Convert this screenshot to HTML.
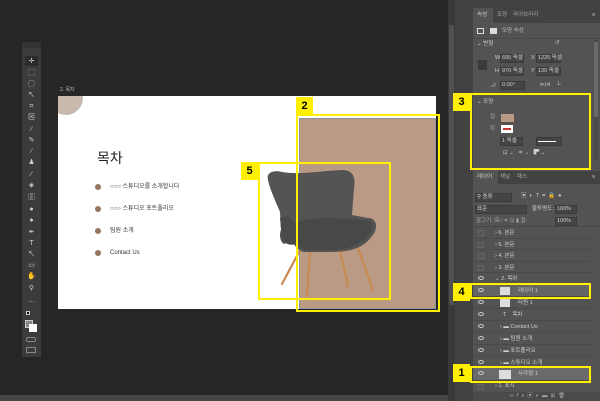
<!DOCTYPE html>
<html><head><meta charset="utf-8"><style>
*{margin:0;padding:0;box-sizing:border-box}
body{width:600px;height:401px;background:#262626;position:relative;overflow:hidden;font-family:"Liberation Sans","Noto Sans CJK KR",sans-serif;color:#ccc}
.a{position:absolute}
.t{position:absolute;font-size:5.5px;white-space:nowrap;color:#cfcfcf;line-height:1}
.yl{position:absolute;border:2px solid #ffef00}
.lab{position:absolute;background:#ffef00;color:#000;font-weight:bold;font-size:11px;text-align:center;line-height:18px;width:17px;height:18px}
.inp{position:absolute;background:#454545;border:1px solid #3a3a3a;height:9px}
.row{position:absolute;left:473px;width:118px;height:11.6px;border-bottom:1px solid #4a4a4a}
.eye{position:absolute;left:5px;top:3px;width:6px;height:4px;border:1px solid #ccc;border-radius:50%}
.box{position:absolute;left:5px;top:3px;width:6px;height:6px;border:1px solid #666}
.tool{position:absolute;left:27px;width:9px;height:7px;font-size:7px;line-height:7px;color:#d0d0d0;text-align:center}
</style></head><body>
<!-- toolbar -->
<div class="a" style="left:22px;top:42px;width:19px;height:315px;background:#3b3b3b"></div>
<div class="a" style="left:22px;top:42px;width:19px;height:6px;background:#333"></div>
<div class="a" style="left:25px;top:56px;width:13px;height:10px;background:#2b2b2b"></div>
<div class="tool" style="top:58px">✛</div>
<div class="tool" style="top:70px">⬚</div>
<div class="tool" style="top:81px">◯</div>
<div class="tool" style="top:92px">↖</div>
<div class="tool" style="top:103px">⌗</div>
<div class="tool" style="top:114px">⊠</div>
<div class="tool" style="top:126px">∕</div>
<div class="tool" style="top:137px">✎</div>
<div class="tool" style="top:148px">∕</div>
<div class="tool" style="top:159px">♟</div>
<div class="tool" style="top:171px">∕</div>
<div class="tool" style="top:182px">◈</div>
<div class="tool" style="top:194px">▥</div>
<div class="tool" style="top:206px">●</div>
<div class="tool" style="top:217px">♠</div>
<div class="tool" style="top:229px">✒</div>
<div class="tool" style="top:240px">T</div>
<div class="tool" style="top:251px">↖</div>
<div class="tool" style="top:262px">▭</div>
<div class="tool" style="top:273px">✋</div>
<div class="tool" style="top:285px">⚲</div>
<div class="tool" style="top:297px">…</div>
<div class="a" style="left:26px;top:311px;width:4px;height:4px;background:#000;border:1px solid #ccc"></div>
<div class="a" style="left:25px;top:320px;width:8px;height:8px;background:#888;border:1px solid #ccc"></div>
<div class="a" style="left:29px;top:324px;width:8px;height:8px;background:#fff"></div>
<div class="a" style="left:26px;top:337px;width:10px;height:5px;border:1px solid #888;border-radius:2px"></div>
<div class="a" style="left:26px;top:347px;width:10px;height:6px;border:1px solid #888"></div>

<!-- canvas -->
<div class="t" style="left:60px;top:88px;font-size:5px;color:#bbb">2. 목차</div>
<div class="a" style="left:58px;top:96px;width:378px;height:213px;background:#fff;overflow:hidden">
  <div class="a" style="left:-9px;top:-15px;width:34px;height:34px;border-radius:50%;background:#c9b8ad"></div>
  <div class="a" style="left:39px;top:52px;font-size:14px;color:#222">목차</div>
  <div class="a" style="left:37px;top:88px;width:6px;height:6px;border-radius:50%;background:#957561"></div>
  <div class="a" style="left:37px;top:110px;width:6px;height:6px;border-radius:50%;background:#957561"></div>
  <div class="a" style="left:37px;top:132px;width:6px;height:6px;border-radius:50%;background:#957561"></div>
  <div class="a" style="left:37px;top:154px;width:6px;height:6px;border-radius:50%;background:#957561"></div>
  <div class="t" style="left:52px;top:88px;color:#333;font-size:6px">○○○ 스튜디오를 소개합니다</div>
  <div class="t" style="left:52px;top:110px;color:#333;font-size:6px">○○○ 스튜디오 포트폴리오</div>
  <div class="t" style="left:52px;top:132px;color:#333;font-size:6px">팀원 소개</div>
  <div class="t" style="left:52px;top:154px;color:#333;font-size:6px">Contact Us</div>
  <div class="a" style="left:241px;top:22px;width:137px;height:191px;background:#bb9a85;border:1px solid #8a96a0"></div>
</div>
<!-- chair -->
<svg class="a" style="left:260px;top:160px" width="130" height="140" viewBox="0 0 130 140">
 <g stroke="#c88a52" stroke-width="2.2" stroke-linecap="round">
  <line x1="40" y1="90" x2="22" y2="124"/>
  <line x1="50" y1="90" x2="47" y2="136"/>
  <line x1="80" y1="90" x2="88" y2="126"/>
  <line x1="98" y1="88" x2="113" y2="130"/>
 </g>
 <path d="M8,20 C6,12 14,10 22,12 C40,15 60,11 82,10 C92,10 96,16 94,28 L92,55 L108,58 C118,58 118,70 112,76 C104,88 90,92 70,92 L44,92 C36,90 34,84 32,80 L24,84 C20,82 19,74 21,70 L20,52 C16,42 10,30 8,20 Z" fill="#545454"/>
 <path d="M36,62 C55,56 80,58 108,60 C114,64 114,70 110,74 C100,86 86,90 70,90 L46,90 C38,88 36,82 35,76 Z" fill="#484848"/>
 <path d="M20,58 C26,54 34,58 36,66 L36,84 C30,86 24,84 22,78 Z" fill="#4a4a4a"/>
</svg>
<!-- yellow annotations -->
<div class="yl" style="left:296px;top:114px;width:144px;height:198px"></div>
<div class="lab" style="left:296px;top:97px">2</div>
<div class="yl" style="left:258px;top:162px;width:133px;height:138px"></div>
<div class="lab" style="left:241px;top:162px">5</div>

<!-- status bar -->
<div class="a" style="left:0;top:395px;width:448px;height:6px;background:#454545"></div>
<!-- scroll strips -->
<div class="a" style="left:448px;top:0;width:7px;height:401px;background:#393939"></div>
<div class="a" style="left:449px;top:25px;width:5px;height:280px;background:#505050"></div>
<div class="a" style="left:455px;top:0;width:18px;height:401px;background:#424242"></div>

<!-- panel -->
<div class="a" style="left:473px;top:0;width:127px;height:401px;background:#535353"></div>
<div class="a" style="left:473px;top:0;width:127px;height:8px;background:#424242"></div>
<div class="a" style="left:473px;top:8px;width:127px;height:15px;background:#424242"></div>
<div class="a" style="left:473px;top:8px;width:20px;height:15px;background:#535353"></div>
<div class="t" style="left:477px;top:13px">속성</div>
<div class="t" style="left:497px;top:13px;color:#aaa">조정</div>
<div class="t" style="left:513px;top:13px;color:#aaa">라이브러리</div>
<div class="t" style="left:592px;top:13px">≡</div>
<div class="a" style="left:477px;top:28px;width:7px;height:6px;border:1px solid #ddd"></div>
<div class="a" style="left:490px;top:28px;width:7px;height:6px;background:#ddd"></div>
<div class="t" style="left:502px;top:29px;color:#bbb">모양 속성</div>
<div class="a" style="left:473px;top:38px;width:127px;height:1px;background:#474747"></div>
<div class="t" style="left:477px;top:42px">⌄ 변형</div>
<div class="t" style="left:555px;top:41px">↺</div>
<div class="a" style="left:478px;top:60px;width:9px;height:10px;background:#3a3a3a"></div>
<div class="t" style="left:495px;top:56px">W</div><div class="inp" style="left:500px;top:54px;width:24px"></div><div class="t" style="left:502px;top:56px">695 픽셀</div>
<div class="t" style="left:531px;top:56px">X</div><div class="inp" style="left:536px;top:54px;width:25px"></div><div class="t" style="left:538px;top:56px">1225 픽셀</div>
<div class="t" style="left:495px;top:69px">H</div><div class="inp" style="left:500px;top:67px;width:24px"></div><div class="t" style="left:502px;top:69px">970 픽셀</div>
<div class="t" style="left:531px;top:69px">Y</div><div class="inp" style="left:536px;top:67px;width:25px"></div><div class="t" style="left:538px;top:69px">130 픽셀</div>
<div class="t" style="left:491px;top:83px">◿</div><div class="inp" style="left:500px;top:81px;width:25px"></div><div class="t" style="left:502px;top:83px">0.00°</div>
<div class="t" style="left:540px;top:83px">⊳|⊲</div><div class="t" style="left:556px;top:82px">⊥</div>
<div class="a" style="left:594px;top:40px;width:4px;height:120px;background:#4a4a4a"></div>
<div class="a" style="left:594px;top:42px;width:4px;height:75px;background:#6a6a6a"></div>
<div class="yl" style="left:470px;top:93px;width:121px;height:77px"></div>
<div class="lab" style="left:453px;top:93px">3</div>
<div class="t" style="left:477px;top:100px">⌄ 모양</div>
<div class="t" style="left:490px;top:115px;color:#aaa">칠</div>
<div class="a" style="left:501px;top:114px;width:13px;height:8px;background:#bb9a85"></div>
<div class="t" style="left:490px;top:127px;color:#aaa">획</div>
<div class="a" style="left:501px;top:125px;width:12px;height:8px;background:#fff"></div>
<div class="a" style="left:503px;top:128px;width:8px;height:2px;background:#c33"></div>
<div class="inp" style="left:500px;top:137px;width:23px"></div><div class="t" style="left:502px;top:139px">1 픽셀</div>
<div class="inp" style="left:536px;top:137px;width:26px"></div><div class="a" style="left:538px;top:141px;width:18px;height:1px;background:#fff"></div>
<div class="t" style="left:503px;top:151px">⊡ ⌄ &nbsp; ≑ ⌄ &nbsp; ▛ ⌄</div>
<!-- layers -->
<div class="a" style="left:473px;top:171px;width:127px;height:13px;background:#424242"></div>
<div class="a" style="left:473px;top:171px;width:25px;height:13px;background:#535353"></div>
<div class="t" style="left:477px;top:175px">레이어</div>
<div class="t" style="left:500px;top:175px;color:#aaa">채널</div>
<div class="t" style="left:517px;top:175px;color:#aaa">패스</div>
<div class="t" style="left:592px;top:175px">≡</div>
<div class="inp" style="left:475px;top:193px;width:37px"></div><div class="t" style="left:477px;top:195px">⚲ 종류</div>
<div class="t" style="left:521px;top:194px;letter-spacing:3px">▣◐T⌗🔒●</div>
<div class="inp" style="left:475px;top:205px;width:52px"></div><div class="t" style="left:477px;top:207px">표준</div>
<div class="t" style="left:532px;top:207px">불투명도:</div><div class="inp" style="left:555px;top:205px;width:22px"></div><div class="t" style="left:557px;top:207px">100%</div>
<div class="t" style="left:476px;top:219px;color:#aaa">잠그기: ⊠ ∕ ≑ ⊡ ▮ 칠:</div><div class="inp" style="left:555px;top:217px;width:22px"></div><div class="t" style="left:557px;top:219px">100%</div>
<div class="a" style="left:473px;top:226px;width:127px;height:1px;background:#474747"></div>

<div class="row" style="top:227px"><div class="box"></div><div class="t" style="left:22px;top:4px">› 6. 본문</div></div>
<div class="row" style="top:238.6px"><div class="box"></div><div class="t" style="left:22px;top:4px">› 5. 본문</div></div>
<div class="row" style="top:250.2px"><div class="box"></div><div class="t" style="left:22px;top:4px">› 4. 본문</div></div>
<div class="row" style="top:261.8px"><div class="box"></div><div class="t" style="left:22px;top:4px">› 3. 본문</div></div>
<div class="row" style="top:273.4px"><div class="eye"></div><div class="t" style="left:22px;top:4px">⌄ 2. 목차</div></div>
<div class="row" style="top:285px;background:#656565"><div class="eye"></div><div class="a" style="left:27px;top:2px;width:10px;height:8px;background:#ddd"></div><div class="t" style="left:45px;top:4px">레이어 1</div></div>
<div class="row" style="top:297px"><div class="eye"></div><div class="a" style="left:27px;top:2px;width:10px;height:8px;background:#ddd"></div><div class="t" style="left:45px;top:4px">타원 1</div></div>
<div class="row" style="top:309px"><div class="eye"></div><div class="t" style="left:30px;top:4px">T &nbsp; &nbsp;목차</div></div>
<div class="row" style="top:321px"><div class="eye"></div><div class="t" style="left:27px;top:4px">› ▬ Contact Us</div></div>
<div class="row" style="top:333px"><div class="eye"></div><div class="t" style="left:27px;top:4px">› ▬ 팀원 소개</div></div>
<div class="row" style="top:345px"><div class="eye"></div><div class="t" style="left:27px;top:4px">› ▬ 포트폴리오</div></div>
<div class="row" style="top:357px"><div class="eye"></div><div class="t" style="left:27px;top:4px">› ▬ 스튜디오 소개</div></div>
<div class="row" style="top:368px;background:#6a6a6a;height:13px"><div class="eye"></div><div class="a" style="left:26px;top:2px;width:12px;height:9px;background:#ddd"></div><div class="t" style="left:45px;top:4px">사각형 1</div></div>
<div class="row" style="top:381px"><div class="box"></div><div class="t" style="left:22px;top:3px">› 1. 표지</div></div>
<div class="a" style="left:473px;top:392px;width:127px;height:9px;background:#4a4a4a"></div>
<div class="t" style="left:510px;top:394px;color:#aaa;letter-spacing:3px">∞fx▣◐▬⊞🗑</div>
<div class="yl" style="left:470px;top:283px;width:121px;height:16px"></div>
<div class="lab" style="left:453px;top:283px">4</div>
<div class="yl" style="left:470px;top:366px;width:121px;height:17px"></div>
<div class="lab" style="left:453px;top:364px">1</div>
</body></html>
